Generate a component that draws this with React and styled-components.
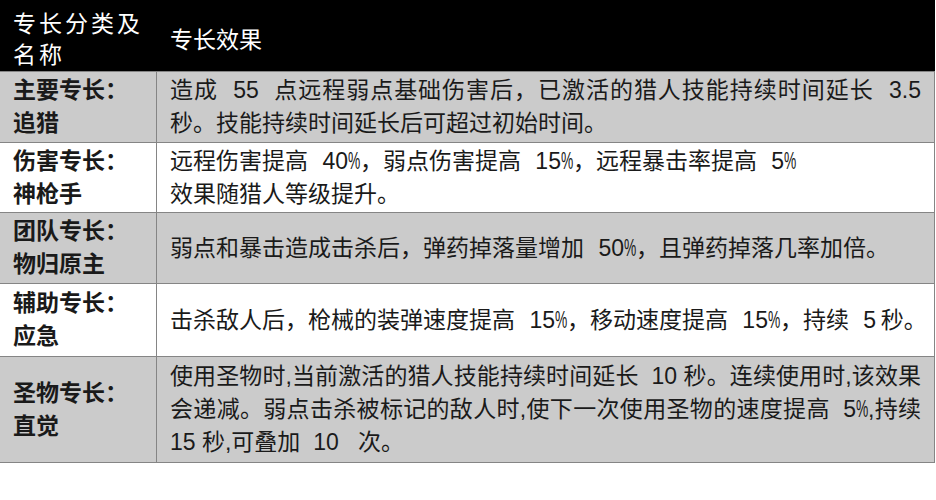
import styled, { createGlobalStyle } from "styled-components";

const GlobalStyle = createGlobalStyle`
  body {
    margin: 0;
    background: #fff;
    font-family: "Liberation Sans", "Noto Sans CJK SC", sans-serif;
  }
`;

const Table = styled.table`
  width: 935px;
  border-collapse: separate;
  border-spacing: 0;
  table-layout: fixed;
  font-size: 23px;
  color: #1a1a1a;
`;

const HeadRow = styled.tr`
  background: #000;
  color: #fff;
`;

const HeadCell = styled.th`
  padding: 9px 13px 0;
  text-align: left;
  vertical-align: middle;
  font-weight: 400;
  letter-spacing: ${(props) => (props.$spaced ? "3px" : "0")};
  border-bottom: 1px solid #858585;
`;

const Row = styled.tr`
  background: ${(props) => (props.$shaded ? "#cbcbcb" : "#fff")};
`;

const Cell = styled.td`
  padding: ${(props) => props.$pad};
  vertical-align: middle;
  font-weight: ${(props) => (props.$bold ? 700 : 400)};
  word-spacing: ${(props) => (props.$spacing ? "8px" : "0")};
  border-right: 1px solid #858585;
  border-bottom: 1px solid #858585;
`;

const Line = styled.div`
  height: ${(props) => props.$h || 33}px;
  line-height: ${(props) => props.$h || 33}px;
  white-space: pre;
  text-align: ${(props) => (props.$justify ? "justify" : "left")};
  text-align-last: ${(props) => (props.$justify ? "justify" : "auto")};
`;

// the percent sign in the source is a narrow glyph
const Pct = styled.span`
  display: inline-block;
  width: 12px;
  transform: scaleX(0.6);
  transform-origin: left center;
  word-spacing: 0;
`;

const withPct = (text) =>
  text.split("%").flatMap((part, i) => (i === 0 ? [part] : [<Pct key={i}>%</Pct>, part]));

const rows = [
  {
    name: ["主要专长：", "追猎"],
    effect: [
      { text: "造成 55 点远程弱点基础伤害后，已激活的猎人技能持续时间延长 3.5", justify: true },
      { text: "秒。技能持续时间延长后可超过初始时间。" },
    ],
    pad: "2px 13px",
    spacing: true,
  },
  {
    name: ["伤害专长：", "神枪手"],
    effect: [{ text: "远程伤害提高 40%，弱点伤害提高 15%，远程暴击率提高 5%" }, { text: "效果随猎人等级提升。" }],
    pad: "2px 13px 1px",
    spacing: true,
  },
  {
    name: ["团队专长：", "物归原主"],
    effect: [{ text: "弱点和暴击造成击杀后，弹药掉落量增加 50%，且弹药掉落几率加倍。" }],
    pad: "2px 13px",
    spacing: true,
  },
  {
    name: ["辅助专长：", "应急"],
    effect: [{ text: "击杀敌人后，枪械的装弹速度提高 15%，移动速度提高 15%，持续 5\u2009秒。" }],
    pad: "3px 13px",
    spacing: true,
  },
  {
    name: ["圣物专长：", "直觉"],
    effect: [
      { text: "使用圣物时,当前激活的猎人技能持续时间延长  10 秒。连续使用时,该效果", justify: true },
      { text: "会递减。弱点击杀被标记的敌人时,使下一次使用圣物的速度提高  5%,持续", justify: true },
      { text: "15 秒,可叠加  10   次。" },
    ],
    pad: "3px 13px",
    spacing: false,
  },
];

export default function App() {
  return (
    <>
      <GlobalStyle />
      <Table>
        <colgroup>
          <col style={{ width: "157px" }} />
          <col />
        </colgroup>
        <thead>
          <HeadRow>
            <HeadCell $spaced>
              <Line $h={31}>专长分类及</Line>
              <Line $h={31}>名称</Line>
            </HeadCell>
            <HeadCell>
              <Line $h={31}>专长效果</Line>
            </HeadCell>
          </HeadRow>
        </thead>
        <tbody>
          {rows.map((row, i) => (
            <Row key={row.name[0]} $shaded={i % 2 === 0}>
              <Cell $bold $pad={row.pad}>
                {row.name.map((l) => (
                  <Line key={l}>{l}</Line>
                ))}
              </Cell>
              <Cell $pad={row.pad} $spacing={row.spacing}>
                {row.effect.map((l) => (
                  <Line key={l.text} $justify={l.justify}>
                    {withPct(l.text)}
                  </Line>
                ))}
              </Cell>
            </Row>
          ))}
        </tbody>
      </Table>
    </>
  );
}
